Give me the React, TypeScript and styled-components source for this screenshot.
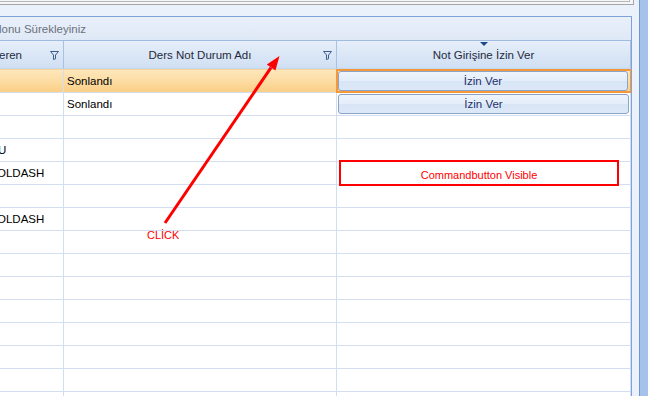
import styled, { createGlobalStyle } from "styled-components";

const GlobalStyle = createGlobalStyle`
  body {
    margin: 0;
    background: #ebf1fa;
    overflow: hidden;
    font-family: "Liberation Sans", Arial, sans-serif;
  }
`;

type Row = { left?: string; leftShift?: number; status?: string; button?: boolean };

const rows: Row[] = [
  { status: "Sonlandı", button: true },
  { status: "Sonlandı", button: true },
  {},
  { left: "U", leftShift: -2 },
  { left: "OLDASH", leftShift: -3 },
  {},
  { left: "OLDASH", leftShift: -3 },
  {}, {}, {}, {}, {}, {}, {}, {},
];

function Funnel() {
  return (
    <FilterIcon width="10" height="9" viewBox="0 0 10 9">
      <path d="M0.5 0.5 H8.5 L5.5 4 V7.8 L3.5 8.5 V4 Z" fill="none" stroke="#3e5c8e" strokeWidth="1" />
    </FilterIcon>
  );
}

function App() {
  return (
    <Page>
      <GlobalStyle />
      <Main>
        <TopBox>
          <TopInner />
        </TopBox>
        <GridFrame>
          <GroupPanel>
            <GroupText>lonu Sürekleyiniz</GroupText>
          </GroupPanel>
          <Header>
            <HeadCell>
              <HeadText $shift={-1}>eren</HeadText>
              <Funnel />
            </HeadCell>
            <HeadCell $center>
              <HeadText>Ders Not Durum Adı</HeadText>
              <Funnel />
            </HeadCell>
            <HeadCell $center>
              <SortMark />
              <HeadText>Not Girişine İzin Ver</HeadText>
            </HeadCell>
          </Header>
          {rows.map((r, i) => (
            <BodyRow key={i} $selected={i === 0}>
              <Cell>
                {r.left && <CellText $shift={r.leftShift}>{r.left}</CellText>}
              </Cell>
              <Cell>{r.status && <CellText>{r.status}</CellText>}</Cell>
              <Cell $focused={i === 0} $pad>
                {r.button && <GridButton>İzin Ver</GridButton>}
              </Cell>
            </BodyRow>
          ))}
        </GridFrame>
      </Main>
      <ScrollStrip />

      <Arrow width="648" height="396" viewBox="0 0 648 396">
        <line x1="165" y1="223" x2="271" y2="67.6" stroke="#ff0000" strokeWidth="3" />
        <polygon points="279.5,56 275.4,70.6 266.8,64.6" fill="#ff0000" />
      </Arrow>
      <ClickLabel>CLİCK</ClickLabel>
      <Callout>Commandbutton Visible</Callout>
    </Page>
  );
}

export default App;

interface ShiftProps {
  $shift?: number;
}

const Page = styled.div`
  position: relative;
  width: 648px;
  height: 396px;
  display: flex;
  overflow: hidden;
`;

const Main = styled.div`
  width: 640px;
  display: flex;
  flex-direction: column;
`;

const TopBox = styled.div`
  box-sizing: border-box;
  width: 634px;
  height: 5px;
  background: #f3f5f8;
  border-right: 1px solid #a6a6a6;
  border-bottom: 1px solid #a6a6a6;
`;

const TopInner = styled.div`
  box-sizing: border-box;
  width: 630px;
  height: 2px;
  border-right: 1px solid #b8b8b8;
  border-bottom: 1px solid #b8b8b8;
`;

const GridFrame = styled.div`
  box-sizing: border-box;
  margin-top: 11px;
  width: 632px;
  flex: 1;
  border-top: 1px solid #7fa3d7;
  border-right: 1px solid #7fa3d7;
  background: #ffffff;
  overflow: hidden;
`;

const GroupPanel = styled.div`
  height: 23px;
  display: flex;
  align-items: center;
  background: linear-gradient(#e9f0fa, #dfe8f6);
`;

const GroupText = styled.span`
  margin-left: -1px;
  font-size: 11.5px;
  color: #6a717c;
`;

const Header = styled.div`
  box-sizing: border-box;
  height: 29px;
  display: grid;
  grid-template-columns: 64px 273px 294px;
  border-top: 1px solid #9fbbe2;
  background: linear-gradient(#e6eef9, #d9e6f6 55%, #cfdff3);
`;

const HeadCell = styled.div<{ $center?: boolean }>`
  position: relative;
  box-sizing: border-box;
  display: flex;
  align-items: center;
  justify-content: ${(p) => (p.$center ? "center" : "flex-start")};
  border-right: 1px solid #a8c1e4;
  border-bottom: 1px solid #c5d7ef;
  overflow: hidden;
`;

const HeadText = styled.span<ShiftProps>`
  margin-left: ${(p) => p.$shift ?? 0}px;
  font-size: 11.5px;
  color: #1f2a3d;
  white-space: nowrap;
`;

const FilterIcon = styled.svg`
  position: absolute;
  right: 3px;
  top: 10px;
`;

const SortMark = styled.div`
  position: absolute;
  top: 1px;
  left: 50%;
  margin-left: -4px;
  width: 0;
  height: 0;
  border-left: 4px solid transparent;
  border-right: 4px solid transparent;
  border-top: 4px solid #1f4a8a;
`;

const BodyRow = styled.div<{ $selected?: boolean }>`
  box-sizing: border-box;
  height: 23px;
  display: grid;
  grid-template-columns: 64px 273px 294px;
  border-top: 1px solid ${(p) => (p.$selected ? "#f7d59c" : "#d3dff0")};
  background: ${(p) =>
    p.$selected ? "linear-gradient(#fde7bb, #fcdca4 50%, #fbcf86)" : "#ffffff"};
`;

const Cell = styled.div<{ $focused?: boolean; $pad?: boolean }>`
  box-sizing: border-box;
  display: flex;
  align-items: center;
  padding: ${(p) => (p.$focused ? "1px 2px 1px 1px" : p.$pad ? "1px" : "0")};
  border-right: 1px solid #d0def2;
  overflow: hidden;
  outline: ${(p) => (p.$focused ? "2px solid #f5983b" : "none")};
  outline-offset: -1px;
`;

const CellText = styled.span<ShiftProps>`
  margin-left: ${(p) => (p.$shift !== undefined ? p.$shift : 3)}px;
  font-size: 11.5px;
  color: #000000;
  white-space: nowrap;
`;

const GridButton = styled.div`
  box-sizing: border-box;
  width: 100%;
  height: 100%;
  display: flex;
  align-items: center;
  justify-content: center;
  border: 1px solid #8aa3c6;
  border-radius: 3px;
  background: linear-gradient(#eef4fc, #e4edf9 50%, #d8e5f5 52%, #dce8f7);
  font-size: 11.5px;
  color: #22306e;
`;

const ScrollStrip = styled.div`
  width: 8px;
  border-left: 1px solid #7096cc;
  background: #a5c2eb;
`;

const Arrow = styled.svg`
  position: absolute;
  left: 0;
  top: 0;
  pointer-events: none;
`;

const ClickLabel = styled.div`
  position: absolute;
  left: 147px;
  top: 229px;
  font-size: 11px;
  color: #ff0000;
`;

const Callout = styled.div`
  position: absolute;
  left: 339px;
  top: 160px;
  box-sizing: border-box;
  width: 280px;
  height: 26px;
  border: 2px solid #ff0000;
  display: flex;
  align-items: center;
  justify-content: center;
  padding-top: 4px;
  font-size: 11px;
  color: #ff0000;
`;
